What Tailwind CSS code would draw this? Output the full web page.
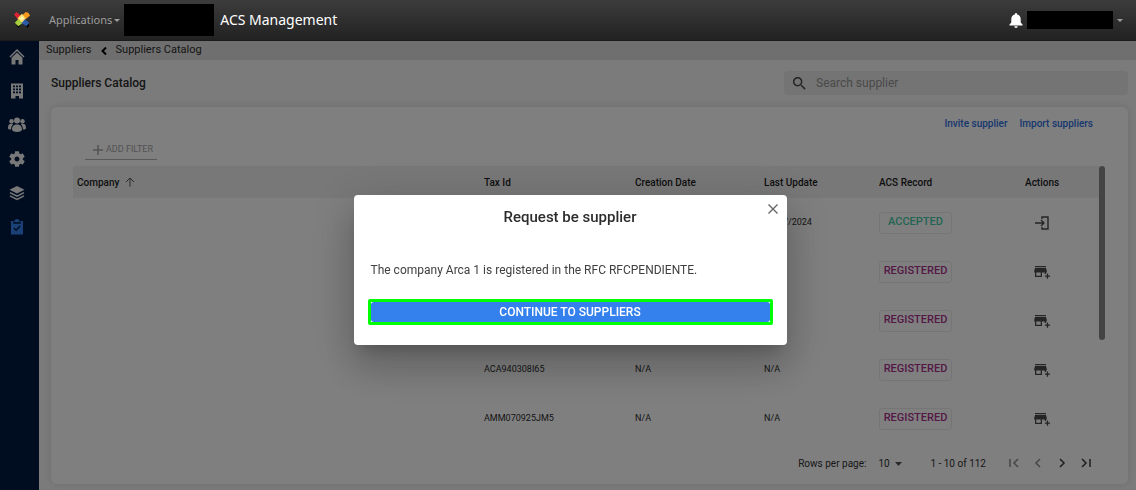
<!DOCTYPE html>
<html lang="en">
<head>
    <meta charset="UTF-8">
    <meta name="viewport" content="width=device-width, initial-scale=1.0">
    <title>ACS Management - Suppliers Catalog</title>
    <script src="https://cdn.jsdelivr.net/npm/@tailwindcss/browser@4"></script>
</head>
<body class="min-h-screen flex flex-col bg-[#f7f7f7] font-['Roboto',sans-serif] text-[#2c2c2c]">

    <!-- Top bar -->
    <header class="relative z-20 flex items-center h-[41px] px-[13px] bg-linear-to-b from-[#3c3c3c] to-[#222222] border-b border-[#1c1c1c] font-['Noto_Sans',sans-serif]">
        <a href="#" aria-label="Home" class="mr-[18px]">
            <svg class="w-[18px] h-[18px]" viewBox="0 0 20 20">
                <path d="M4 16l3-3 2 2-3 4zM13 15l3-3 2 4-2 3z" fill="#000"/>
                <path d="M1 4l3-3 6 5-4 4z" fill="#d92231"/>
                <path d="M17 2l2 3-6 5-4-4 5-5z" fill="#f39a1e"/>
                <path d="M6 9l5 4-5 4-4-4z" fill="#a5cf3c"/>
                <path d="M13 9l5 4-3 4-6-4z" fill="#2c5aa8"/>
                <path d="M10 3l4 5-4 5-5-5z" fill="#ffe169"/>
                <circle cx="10" cy="8" r="2" fill="#fff4b0"/>
            </svg>
        </a>
        <button class="flex items-center gap-[2px] text-[11px] text-[#9d9d9d] mr-1">
            Applications
            <svg class="w-[6px] h-[3px]" viewBox="0 0 6 3" fill="currentColor"><path d="M0 0h6L3 3z"/></svg>
        </button>
        <div class="w-[90px] h-8 bg-black"></div>
        <h1 class="ml-[6px] text-sm text-white">ACS Management</h1>

        <div class="ml-auto flex items-center">
            <button aria-label="Notifications" class="text-white mr-1">
                <svg class="w-[14px] h-[15px]" viewBox="0 0 14 15" fill="currentColor">
                    <path d="M7 0c.7 0 1 .5 1 1.200 2.400.6 3.700 2.500 3.700 4.800v3.500L13.500 11.500V12.500H.5v-1L2.300 9.500V6C2.300 3.700 3.600 1.800 6 1.200 6 .5 6.300 0 7 0zM5.300 13.300h3.400C8.700 14.300 8 15 7 15s-1.700-.7-1.700-1.700z"/>
                </svg>
            </button>
            <div class="w-[86px] h-[18px] bg-black"></div>
            <button aria-label="Account" class="text-[#9d9d9d] ml-1">
                <svg class="w-[6px] h-[3px]" viewBox="0 0 6 3" fill="currentColor"><path d="M0 0h6L3 3z"/></svg>
            </button>
        </div>
    </header>

    <div class="flex flex-1">
        <!-- Sidebar -->
        <nav class="w-[39px] shrink-0 flex flex-col items-center gap-4 pt-[7px] pr-[5px] bg-[#001b42] text-[#f0f0f0]">
            <a href="#" aria-label="Home">
                <svg class="w-[18px] h-[18px]" viewBox="0 0 18 18">
                    <path d="M2 9l7-7 7 7" fill="none" stroke="currentColor" stroke-width="1.500"/>
                    <path d="M3.500 9.800L9 4.500l5.500 5.300V16.500h-4V12h-3v4.500h-4z" fill="currentColor"/>
                </svg>
            </a>
            <a href="#" aria-label="Companies">
                <svg class="w-[18px] h-[18px]" viewBox="0 0 18 18" fill="currentColor" fill-rule="evenodd">
                    <path d="M3 1.500h12v15h-4V14H7.500v2.500H3zM5 3.500v1.800H7V3.500zM8 3.500v1.800h2V3.500zM11 3.500v1.800h2V3.500zM5 6.500v1.800H7V6.500zM8 6.500v1.800h2V6.500zM11 6.500v1.800h2V6.500zM5 9.500v1.800H7V9.500zM8 9.500v1.800h2V9.500zM11 9.500v1.800h2V9.500z"/>
                </svg>
            </a>
            <a href="#" aria-label="Users">
                <svg class="w-[18px] h-[18px]" viewBox="0 0 18 18" fill="currentColor">
                    <circle cx="9" cy="4.500" r="3"/>
                    <circle cx="3.500" cy="5.200" r="2.200"/>
                    <circle cx="14.500" cy="5.200" r="2.200"/>
                    <path d="M4 13.500c0-3.500 2-5 5-5s5 1.500 5 5c0 1.500-2 2.500-5 2.500s-5-1-5-2.500zM0 12c0-3 1-4.500 4-4.200C5 8 5 8 5 8.500 3.600 9.700 3.200 11.300 3 13.500 1 13.500 0 13 0 12zM18 12c0-3-1-4.500-4-4.200-1 .2-1 .2-1 .7 1.400 1.200 1.800 2.800 2 5 2 0 3-.5 3-1.500z"/>
                </svg>
            </a>
            <a href="#" aria-label="Settings">
                <svg class="w-[18px] h-[18px]" viewBox="1 1 22 22" fill="currentColor">
                    <path d="M19.140 12.940c.04-.3.06-.61.06-.94 0-.32-.02-.64-.07-.94l2.030-1.580c.18-.14.23-.41.12-.61l-1.920-3.320c-.12-.22-.37-.29-.59-.22l-2.390.96c-.5-.38-1.030-.7-1.620-.94l-.36-2.540c-.04-.24-.24-.41-.48-.41h-3.840c-.24 0-.43.17-.47.41l-.36 2.540c-.59.24-1.130.57-1.620.94l-2.390-.96c-.22-.08-.47 0-.59.22L2.740 8.870c-.12.21-.08.47.12.61l2.030 1.580c-.05.3-.09.63-.09.94s.02.64.07.94l-2.030 1.580c-.18.14-.23.41-.12.61l1.920 3.320c.12.22.37.29.59.22l2.390-.96c.5.38 1.030.7 1.620.94l.36 2.540c.05.24.24.41.48.41h3.840c.24 0 .44-.17.47-.41l.36-2.540c.59-.24 1.130-.56 1.620-.94l2.390.96c.22.08.47 0 .59-.22l1.920-3.320c.12-.22.07-.47-.12-.61zM12 15c-1.650 0-3-1.350-3-3s1.350-3 3-3 3 1.350 3 3-1.350 3-3 3z"/>
                </svg>
            </a>
            <a href="#" aria-label="Layers">
                <svg class="w-[18px] h-[18px]" viewBox="0 0 18 18" fill="currentColor">
                    <path d="M9 2l7.500 3.700L9 9.500 1.500 5.700z"/>
                    <path d="M2 8.600l7 3.500 7-3.500M2 11.900l7 3.500 7-3.500" fill="none" stroke="currentColor" stroke-width="1.600"/>
                </svg>
            </a>
            <a href="#" aria-label="Suppliers" class="text-[#3480ec]">
                <svg class="w-[18px] h-[18px]" viewBox="0 0 18 18" fill="currentColor">
                    <path d="M3 3h3.500a2.500 2 0 0 1 5 0H15v13.500H3z"/>
                    <path d="M6 3.500v1.500h6V3.500M5.800 10l2.300 2.300 4-4.200" fill="none" stroke="#001b42" stroke-width="1.400"/>
                </svg>
            </a>
        </nav>

        <main class="flex-1 min-w-0">
            <!-- Breadcrumb -->
            <div class="flex items-center h-[19px] pl-[7px] bg-[#dedede] text-[11px]">
                <a href="#">Suppliers</a>
                <svg class="w-[6px] h-2 mx-[9px]" viewBox="0 0 6 8" fill="none" stroke="#000" stroke-width="2"><path d="M5 .5L1.500 4 5 7.500"/></svg>
                <a href="#">Suppliers Catalog</a>
            </div>

            <div class="pl-3 pr-2 pb-[6px]">
                <div class="flex items-center justify-between pt-[11px] pb-3">
                    <h2 class="text-xs font-medium">Suppliers Catalog</h2>
                    <label class="flex items-center gap-[10px] w-1/3 max-w-[344px] h-6 pl-[9px] rounded bg-[#e8e8e8]">
                        <svg class="w-[13px] h-[13px] shrink-0" viewBox="3 3 18 18" fill="#4a4a4a">
                            <path d="M15.500 14h-.79l-.28-.27C15.410 12.590 16 11.110 16 9.500 16 5.910 13.090 3 9.500 3S3 5.910 3 9.500 5.910 16 9.500 16c1.610 0 3.090-.59 4.230-1.570l.27.28v.79l5 4.990L20.490 19l-4.990-5zm-6 0C7.010 14 5 11.990 5 9.500S7.010 5 9.500 5 14 7.010 14 9.500 11.990 14 9.500 14z"/>
                        </svg>
                        <input type="text" aria-label="Search supplier" placeholder="Search supplier" class="w-full text-xs placeholder:text-[#949494] outline-none">
                    </label>
                </div>

                <!-- Catalog card -->
                <section class="rounded-md bg-white shadow-[0_0_10px_rgba(0,0,0,0.12)] pl-[22px] pr-[23px] pt-[9px] pb-1">
                    <div class="flex justify-end gap-3 pr-3 text-[10px] leading-4 font-medium text-[#2f6fde]">
                        <a href="#">Invite supplier</a>
                        <a href="#">Import suppliers</a>
                    </div>
                    <button class="flex items-center gap-[2px] ml-3 mt-2 mb-[6px] pl-[7px] pr-1 h-5 border-b border-[#b0b0b0] text-[9px] text-[#a6a6a6]">
                        <svg class="w-3 h-3" viewBox="0 0 12 12" stroke="currentColor" stroke-width="1.500"><path d="M6 1v10M1 6h10"/></svg>
                        ADD FILTER
                    </button>

                    <div class="flex">
                        <table class="flex-1 w-full table-fixed text-left text-[9px]">
                            <colgroup>
                                <col>
                                <col class="w-[151px]">
                                <col class="w-[129px]">
                                <col class="w-[115px]">
                                <col class="w-[146px]">
                                <col class="w-[74px]">
                            </colgroup>
                            <thead class="bg-[#f0f0f0] text-[10px] text-[#1c1c1c]">
                                <tr class="h-8">
                                    <th class="pl-1 font-medium">
                                        <span class="flex items-center gap-[6px]">Company
                                            <svg class="w-[10px] h-[10px]" viewBox="0 0 10 10" fill="none" stroke="#555"><path d="M5 9.500V1M1 5l4-4 4 4"/></svg>
                                        </span>
                                    </th>
                                    <th class="font-medium">Tax Id</th>
                                    <th class="font-medium">Creation Date</th>
                                    <th class="font-medium">Last Update</th>
                                    <th class="font-medium">ACS Record</th>
                                    <th class="font-medium">Actions</th>
                                </tr>
                            </thead>
                            <tbody id="supplierRows"></tbody>
                        </table>
                        <div class="w-[6px] h-[174px] shrink-0 rounded-full bg-[#888888]"></div>
                    </div>

                    <!-- Pagination -->
                    <div class="flex items-center justify-end h-[34px] mt-[3px] pr-[13px] text-[10px] text-[#303030]">
                        <label for="rowsPerPage">Rows per page:</label>
                        <div class="relative ml-3 mr-7">
                            <select id="rowsPerPage" class="appearance-none w-6 block">
                                <option>10</option>
                                <option>25</option>
                            </select>
                            <svg class="absolute right-0 top-[6px] w-[7px] h-1 pointer-events-none" viewBox="0 0 7 4" fill="#555"><path d="M0 0h7L3.500 4z"/></svg>
                        </div>
                        <span class="mr-[22px]">1 - 10 of 112</span>
                        <div class="flex gap-3 text-[#3c3c3c]">
                            <button disabled aria-label="First page" class="text-[#8c8c8c]"><svg class="w-3 h-3" viewBox="0 0 12 12" fill="none" stroke="currentColor" stroke-width="1.500"><path d="M2 2v8M10 2L6 6l4 4"/></svg></button>
                            <button disabled aria-label="Previous page" class="text-[#8c8c8c]"><svg class="w-3 h-3" viewBox="0 0 12 12" fill="none" stroke="currentColor" stroke-width="1.500"><path d="M8 2L4 6l4 4"/></svg></button>
                            <button aria-label="Next page"><svg class="w-3 h-3" viewBox="0 0 12 12" fill="none" stroke="currentColor" stroke-width="1.500"><path d="M4 2l4 4-4 4"/></svg></button>
                            <button aria-label="Last page"><svg class="w-3 h-3" viewBox="0 0 12 12" fill="none" stroke="currentColor" stroke-width="1.500"><path d="M2 2l4 4-4 4M10 2v8"/></svg></button>
                        </div>
                    </div>
                </section>
            </div>
        </main>
    </div>

    <!-- Modal -->
    <div class="fixed inset-0 z-10 flex items-center justify-center pt-[50px] pl-1 bg-black/50">
        <div role="dialog" aria-labelledby="dialogTitle" class="relative w-[433px] max-w-full rounded bg-white px-[14px] pt-3 pb-5 shadow-[0_11px_15px_-7px_rgba(0,0,0,0.2),0_24px_38px_3px_rgba(0,0,0,0.14),0_9px_46px_8px_rgba(0,0,0,0.12)]">
            <button id="closeDialog" aria-label="Close" class="absolute top-[9px] right-[9px] text-[#666]">
                <svg class="w-[10px] h-[10px]" viewBox="0 0 10 10" stroke="currentColor" stroke-width="1.400"><path d="M.5.5l9 9M9.500.5l-9 9"/></svg>
            </button>
            <h3 id="dialogTitle" class="text-center text-[15px] leading-5 font-medium">Request be supplier</h3>
            <p class="mt-[33px] mb-[19px] px-[3px] text-xs leading-5 text-[#404040]">The company Arca 1 is registered in the RFC RFCPENDIENTE.</p>
            <div class="border-3 border-[#00ff00] rounded-xs">
                <button class="block w-full h-5 rounded-[3px] bg-[#3480ec] text-white text-xs font-medium">CONTINUE TO SUPPLIERS</button>
            </div>
        </div>
    </div>

    <script>
        const suppliers = [
            { taxId: "", created: "", updated: "17/07/2024", status: "ACCEPTED" },
            { taxId: "", created: "", updated: "", status: "REGISTERED" },
            { taxId: "", created: "", updated: "", status: "REGISTERED" },
            { taxId: "ACA940308I65", created: "N/A", updated: "N/A", status: "REGISTERED" },
            { taxId: "AMM070925JM5", created: "N/A", updated: "N/A", status: "REGISTERED" }
        ];

        const enterIcon = `<svg class="w-4 h-4" viewBox="0 0 16 16" fill="none" stroke="currentColor" stroke-width="1.400"><path d="M1 8h9M7 5l3 3-3 3M8 4V2h6v12H8v-2"/></svg>`;
        const storeIcon = `<svg class="w-4 h-4" viewBox="0 0 16 16" fill="currentColor"><path d="M1 2h11v1.300H1zM1 4h11l.8 3v1.500H12V10h-1.300V8.500H8V13H1V8.500H.200V7zM2.300 8.500v3.200h4.400V8.500zM12.800 9.500h1.300v2H16v1.300h-1.900v2h-1.300v-2h-1.900v-1.300h1.900z"/></svg>`;

        document.getElementById("supplierRows").innerHTML = suppliers.map(s => {
            const accepted = s.status === "ACCEPTED";
            return `
                <tr class="h-[49px]">
                    <td></td>
                    <td>${s.taxId}</td>
                    <td>${s.created}</td>
                    <td>${s.updated}</td>
                    <td><span class="flex items-center justify-center w-[73px] h-[22px] border border-[#ebebeb] rounded-[3px] text-[11px] font-medium ${accepted ? "text-[#45cba9]" : "text-[#a8308c]"}">${s.status}</span></td>
                    <td><button aria-label="${accepted ? "Open supplier" : "Request supplier"}" class="block ml-[9px] text-[#4a4a4a]">${accepted ? enterIcon : storeIcon}</button></td>
                </tr>
            `;
        }).join("");

        document.getElementById("closeDialog").addEventListener("click", e => {
            e.currentTarget.closest(".fixed").remove();
        });
    </script>

</body>
</html>
